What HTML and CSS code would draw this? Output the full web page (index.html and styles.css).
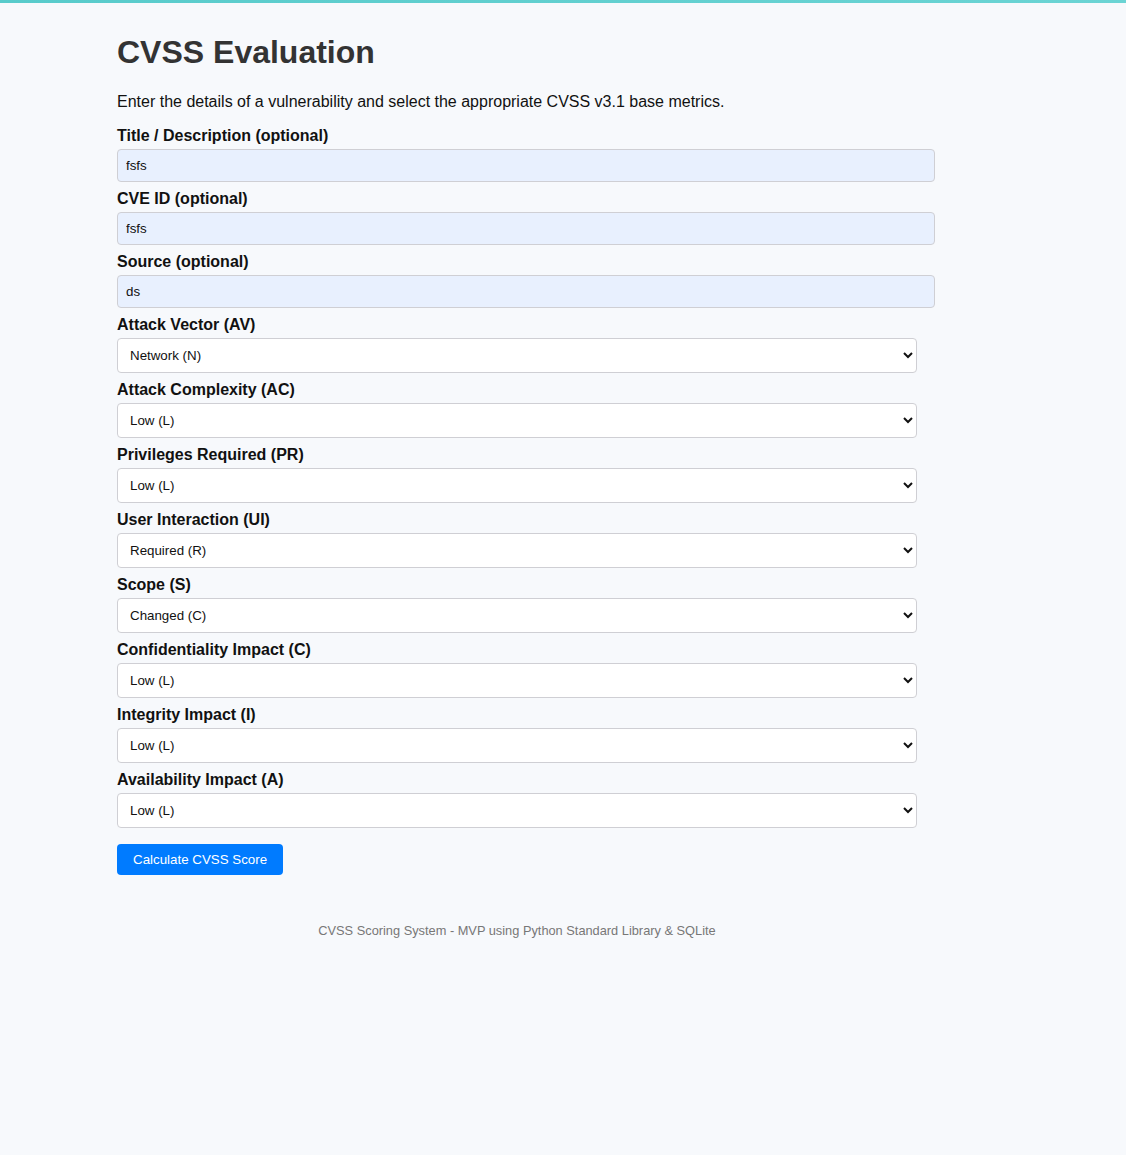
FILE: index.html
```html
<!DOCTYPE html>
<html lang="en">
<head>
<meta charset="utf-8">
<title>CVSS Evaluation</title>
<link rel="stylesheet" href="styles.css">
</head>
<body>
<div class="topbar"></div>
<main class="container">
  <h1 class="title">CVSS Evaluation</h1>
  <p class="intro">Enter the details of a vulnerability and select the appropriate CVSS v3.1 base metrics.</p>
  <form class="form">
    <label class="label" for="title">Title / Description (optional)</label>
    <input class="input" id="title" type="text" value="fsfs">
    <label class="label" for="cve">CVE ID (optional)</label>
    <input class="input" id="cve" type="text" value="fsfs">
    <label class="label" for="source">Source (optional)</label>
    <input class="input" id="source" type="text" value="ds">

    <label class="label" for="av">Attack Vector (AV)</label>
    <select class="select" id="av"><option>Network (N)</option><option>Adjacent (A)</option><option>Local (L)</option><option>Physical (P)</option></select>
    <label class="label" for="ac">Attack Complexity (AC)</label>
    <select class="select" id="ac"><option>Low (L)</option><option>High (H)</option></select>
    <label class="label" for="pr">Privileges Required (PR)</label>
    <select class="select" id="pr"><option>Low (L)</option><option>None (N)</option><option>High (H)</option></select>
    <label class="label" for="ui">User Interaction (UI)</label>
    <select class="select" id="ui"><option>Required (R)</option><option>None (N)</option></select>
    <label class="label" for="s">Scope (S)</label>
    <select class="select" id="s"><option>Changed (C)</option><option>Unchanged (U)</option></select>
    <label class="label" for="c">Confidentiality Impact (C)</label>
    <select class="select" id="c"><option>Low (L)</option><option>None (N)</option><option>High (H)</option></select>
    <label class="label" for="i">Integrity Impact (I)</label>
    <select class="select" id="i"><option>Low (L)</option><option>None (N)</option><option>High (H)</option></select>
    <label class="label" for="a">Availability Impact (A)</label>
    <select class="select" id="a"><option>Low (L)</option><option>None (N)</option><option>High (H)</option></select>

    <button class="button" type="button">Calculate CVSS Score</button>
  </form>
  <footer class="footer">CVSS Scoring System - MVP using Python Standard Library &amp; SQLite</footer>
</main>
</body>
</html>
```
FILE: styles.css
```css
html, body {
  margin: 0;
  padding: 0;
}
body {
  background: #f7f9fc;
  font-family: "Liberation Sans", Arial, sans-serif;
  color: #111;
  min-height: 1155px;
}
.topbar {
  height: 3px;
  background: linear-gradient(90deg, #58cbcb, #6bd4d4);
}
.container {
  width: 800px;
  margin-left: 117px;
}
.title {
  margin: 31px 0 0;
  font-size: 32px;
  line-height: 37px;
  font-weight: bold;
  color: #333;
}
.intro {
  margin: 22px 0 0;
  font-size: 16px;
  line-height: 18px;
  color: #111;
}
.form {
  display: flex;
  flex-direction: column;
  align-items: flex-start;
}
.label {
  display: block;
  margin: 8px 0 4px;
  font-size: 16px;
  line-height: 18px;
  font-weight: bold;
  color: #111;
}
.form .label:first-child {
  margin-top: 16px;
}
.input {
  box-sizing: content-box;
  width: 100%;
  height: 15px;
  padding: 8px;
  border: 1px solid #cfcfd4;
  border-radius: 4px;
  background: #e8f0fe;
  font-family: "Liberation Sans", Arial, sans-serif;
  font-size: 13.33px;
  color: #111;
  margin: 0;
}
.select {
  box-sizing: border-box;
  width: 100%;
  height: 35px;
  padding: 0 8px 0 8px;
  border: 1px solid #cfcfd4;
  border-radius: 4px;
  background: #fff;
  font-family: "Liberation Sans", Arial, sans-serif;
  font-size: 13.33px;
  color: #111;
  margin: 0;
}
.button {
  margin-top: 16px;
  height: 31px;
  padding: 0 16px;
  border: none;
  border-radius: 4px;
  background: #007bff;
  color: #fff;
  font-family: "Liberation Sans", Arial, sans-serif;
  font-size: 13.33px;
  cursor: pointer;
}
.footer {
  margin-top: 48px;
  text-align: center;
  font-family: "Liberation Sans", Arial, sans-serif;
  font-size: 12.8px;
  line-height: 15px;
  color: #777;
}
```
